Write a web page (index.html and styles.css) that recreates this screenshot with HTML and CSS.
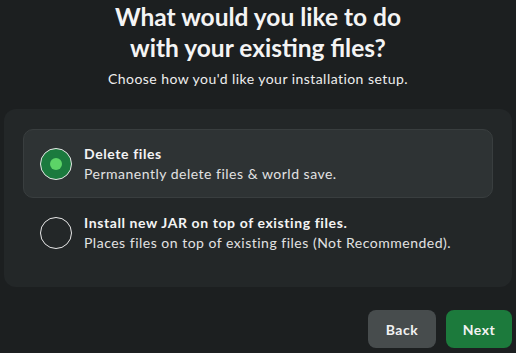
FILE: index.html
```html
<!DOCTYPE html>
<html lang="en">
<head>
<meta charset="utf-8">
<title>Existing files</title>
<link rel="stylesheet" href="styles.css">
</head>
<body>
<main class="page">
  <header class="head">
    <h1 class="title">What would you like to do<br>with your existing files?</h1>
    <p class="subtitle">Choose how you'd like your installation setup.</p>
  </header>
  <section class="panel">
    <label class="option selected">
      <span class="radio checked"><span class="dot"></span></span>
      <span class="text">
        <span class="opt-title">Delete files</span>
        <span class="opt-desc">Permanently delete files &amp; world save.</span>
      </span>
    </label>
    <label class="option">
      <span class="radio"></span>
      <span class="text">
        <span class="opt-title">Install new JAR on top of existing files.</span>
        <span class="opt-desc">Places files on top of existing files (Not Recommended).</span>
      </span>
    </label>
  </section>
  <footer class="actions">
    <button class="btn back">Back</button>
    <button class="btn next">Next</button>
  </footer>
</main>
</body>
</html>
```
FILE: styles.css
```css
html, body {
  margin: 0;
  padding: 0;
  background: #1c1f20;
  height: 100%;
}
body {
  font-family: Lato, "Noto Sans", sans-serif;
  color: #f2f2f2;
}
.page {
  box-sizing: border-box;
  height: 353px;
  padding: 0 4px 5px 4px;
  display: flex;
  flex-direction: column;
}
.head {
  text-align: center;
}
.title {
  margin: 0;
  padding-top: 1px;
  font-size: 24.5px;
  line-height: 31px;
  font-weight: 700;
  letter-spacing: 0;
  color: #f4f4f4;
}
.subtitle {
  margin: 7px 0 0 0;
  font-size: 14px;
  line-height: 18px;
  color: #eeeeee;
  letter-spacing: 0.45px;
}
.panel {
  margin-top: 21px;
  background: #232728;
  border-radius: 12px;
  padding: 20px 19px 20px 19px;
  display: flex;
  flex-direction: column;
}
.option {
  display: flex;
  align-items: center;
  gap: 12px;
  height: 69px;
  box-sizing: border-box;
  padding: 0 16px;
  border-radius: 10px;
  border: 1px solid transparent;
}
.option.selected {
  background: #2e3334;
  border-color: #393e3f;
}
.radio {
  flex: none;
  width: 32px;
  height: 32px;
  box-sizing: border-box;
  border-radius: 50%;
  border: 1.5px solid #e8e8e8;
  display: flex;
  align-items: center;
  justify-content: center;
}
.radio.checked {
  background: #1b7a3e;
}
.dot {
  width: 12px;
  height: 12px;
  border-radius: 50%;
  background: #5cd467;
}
.text {
  display: flex;
  flex-direction: column;
  gap: 1px;
}
.opt-title {
  font-size: 14px;
  line-height: 19px;
  font-weight: 700;
  color: #f4f4f4;
  letter-spacing: 0.6px;
}
.opt-desc {
  font-size: 14px;
  line-height: 19px;
  color: #e2e2e2;
  letter-spacing: 0.5px;
}
.actions {
  margin-top: auto;
  display: flex;
  justify-content: flex-end;
  gap: 10px;
}
.btn {
  height: 38px;
  border: none;
  border-radius: 8px;
  font-family: Lato, "Noto Sans", sans-serif;
  font-size: 14px;
  font-weight: 700;
  color: #f2f2f2;
  letter-spacing: 0.5px;
  cursor: pointer;
}
.back {
  width: 68px;
  background: #474c4d;
}
.next {
  width: 66px;
  background: #1c7a3c;
}
```
